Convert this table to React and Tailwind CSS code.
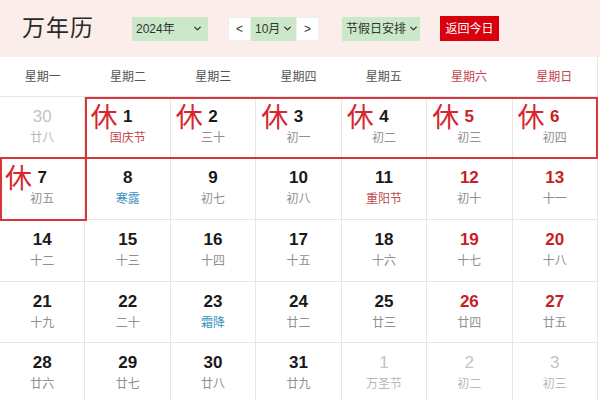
import React from 'react';
import { ChevronDown } from 'lucide-react';

const font = { fontFamily: '"Liberation Sans", "Noto Sans CJK SC", sans-serif' };

const weekdays = ["星期一", "星期二", "星期三", "星期四", "星期五", "星期六", "星期日"];

// kind: n normal, w weekend, o other month
// lc: lunar colour: g gray, r festival red, b solar term blue, o other month
const weeks = [
  [
    { d: 30, l: "廿八", k: "o", lc: "o" },
    { d: 1, l: "国庆节", k: "n", lc: "r", rest: true },
    { d: 2, l: "三十", k: "n", rest: true },
    { d: 3, l: "初一", k: "n", rest: true },
    { d: 4, l: "初二", k: "n", rest: true },
    { d: 5, l: "初三", k: "w", rest: true },
    { d: 6, l: "初四", k: "w", rest: true },
  ],
  [
    { d: 7, l: "初五", k: "n", rest: true },
    { d: 8, l: "寒露", k: "n", lc: "b" },
    { d: 9, l: "初七", k: "n" },
    { d: 10, l: "初八", k: "n" },
    { d: 11, l: "重阳节", k: "n", lc: "r" },
    { d: 12, l: "初十", k: "w" },
    { d: 13, l: "十一", k: "w" },
  ],
  [
    { d: 14, l: "十二", k: "n" },
    { d: 15, l: "十三", k: "n" },
    { d: 16, l: "十四", k: "n" },
    { d: 17, l: "十五", k: "n" },
    { d: 18, l: "十六", k: "n" },
    { d: 19, l: "十七", k: "w" },
    { d: 20, l: "十八", k: "w" },
  ],
  [
    { d: 21, l: "十九", k: "n" },
    { d: 22, l: "二十", k: "n" },
    { d: 23, l: "霜降", k: "n", lc: "b" },
    { d: 24, l: "廿二", k: "n" },
    { d: 25, l: "廿三", k: "n" },
    { d: 26, l: "廿四", k: "w" },
    { d: 27, l: "廿五", k: "w" },
  ],
  [
    { d: 28, l: "廿六", k: "n" },
    { d: 29, l: "廿七", k: "n" },
    { d: 30, l: "廿八", k: "n" },
    { d: 31, l: "廿九", k: "n" },
    { d: 1, l: "万圣节", k: "o", lc: "o" },
    { d: 2, l: "初二", k: "o", lc: "o" },
    { d: 3, l: "初三", k: "o", lc: "o" },
  ],
];

const numColor = { n: "text-[#1a1a1a] font-bold", w: "text-[#c81e24] font-bold", o: "text-[#c4c4c4] font-normal" };
const lunarColor = { g: "text-[#8f8f8f]", r: "text-[#c14a4f]", b: "text-[#3b93bf]", o: "text-[#b8b8b8]" };
const rowHeights = ["h-[61px]", "h-[62px]", "h-[62px]", "h-[61px]", "h-[62px]"];

const Cell = ({ cell }) => (
  <div className="relative flex flex-col items-center border-r border-b border-[#e6e6e6] pt-[9px]">
    {cell.rest && (
      <span className="absolute left-[5px] top-[8px] text-[27px] leading-none text-[#d8262e]">休</span>
    )}
    <span className={`text-[17px] leading-[22px] ${numColor[cell.k]}`}>{cell.d}</span>
    <span className={`mt-[1px] text-[12px] leading-[18px] ${lunarColor[cell.lc || "g"]}`}>{cell.l}</span>
  </div>
);

const App = () => {
  return (
    <div className="w-[600px] h-[400px] overflow-hidden bg-white" style={font}>
      <div className="h-[57px] bg-[#fbede9] flex items-center pl-[22px] whitespace-nowrap">
        <h1 className="text-[23px] text-[#2a2a2a] w-[110px] leading-none tracking-[1px]">万年历</h1>
        <div className="w-[76px] h-[24px] bg-[#cbe8c8] flex items-center justify-between pl-[4px] pr-[5px] text-[12px] text-[#333]">
          <span>2024年</span>
          <ChevronDown size={11} strokeWidth={3} />
        </div>
        <div className="ml-[20px] flex h-[24px] items-stretch text-[12px] text-[#333]">
          <div className="w-[23px] bg-white border border-[#eee] flex items-center justify-center">&lt;</div>
          <div className="w-[45px] bg-[#cbe8c8] flex items-center justify-between pl-[4px] pr-[3px]">
            <span>10月</span>
            <ChevronDown size={11} strokeWidth={3} />
          </div>
          <div className="w-[23px] bg-white border border-[#eee] flex items-center justify-center">&gt;</div>
        </div>
        <div className="ml-[23px] w-[78px] h-[24px] bg-[#cbe8c8] flex items-center gap-[2px] pl-[4px] text-[12px] text-[#333]">
          <span>节假日安排</span>
          <ChevronDown size={11} strokeWidth={3} className="shrink-0" />
        </div>
        <div className="ml-[20px] w-[59px] h-[25px] bg-[#d8000c] text-white text-[12px] flex items-center justify-center">返回今日</div>
      </div>
      <div className="relative w-[598px]">
        <div className="grid grid-cols-7 h-[40px] border-b border-r border-[#e6e6e6]">
          {weekdays.map((w, i) => (
            <div key={w} className={`flex items-center justify-center text-[12px] ${i >= 5 ? "text-[#c2474c]" : "text-[#555]"}`}>
              {w}
            </div>
          ))}
        </div>
        {weeks.map((week, r) => (
          <div key={r} className={`grid grid-cols-7 ${rowHeights[r]}`}>
            {week.map((cell, c) => (
              <Cell key={c} cell={cell} />
            ))}
          </div>
        ))}
        <div className="absolute left-[85px] top-[40px] w-[513px] h-[62px] border-2 border-[#d8363d]" />
        <div className="absolute left-0 top-[100px] w-[87px] h-[64px] border-2 border-[#d8363d]" />
      </div>
    </div>
  );
};

export default App;
